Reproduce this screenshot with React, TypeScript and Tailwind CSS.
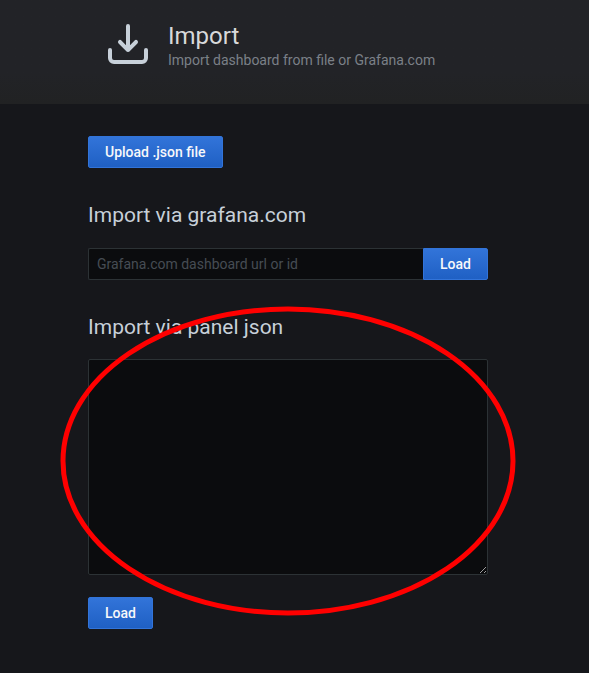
function ImportIcon() {
  return (
    <svg className="size-12 shrink-0 fill-[#c7d0d9]" viewBox="0 0 24 24" aria-hidden="true">
      <path d="M21,14a1,1,0,0,0-1,1v4a1,1,0,0,1-1,1H5a1,1,0,0,1-1-1V15a1,1,0,0,0-2,0v4a3,3,0,0,0,3,3H19a3,3,0,0,0,3-3V15A1,1,0,0,0,21,14Zm-9.71,1.71a1,1,0,0,0,.33.21.94.94,0,0,0,.76,0,1,1,0,0,0,.33-.21l4-4a1,1,0,0,0-1.42-1.42L13,12.59V3a1,1,0,0,0-2,0v9.59L8.71,10.29a1,1,0,1,0-1.42,1.42Z" />
    </svg>
  );
}

function Button({ label, attached = false }: { label: string; attached?: boolean }) {
  const corners = attached ? 'rounded-r-[2px]' : 'rounded-[2px]';
  return (
    <button
      type="button"
      className={`block h-8 shrink-0 border border-[#3274d9] bg-linear-to-b from-[#3274d9] to-[#1f60c4] px-4 text-sm leading-[30px] font-medium whitespace-nowrap text-[#f7f8fa] ${corners}`}
    >
      {label}
    </button>
  );
}

function SectionTitle({ children }: { children: string }) {
  return <h3 className="text-[21px] leading-[26px] text-[#c7d0d9]">{children}</h3>;
}

export default function App() {
  return (
    <div className="relative h-[673px] w-full overflow-hidden bg-[#16171b] font-[Roboto,sans-serif] text-sm">
      <header className="flex h-[104px] items-start bg-linear-to-b from-[#222327] from-70% to-[#212223] pt-5 pl-[104px]">
        <ImportIcon />
        <div className="ml-4 pt-px">
          <h1 className="text-2xl leading-[30px] text-[#d8d9da]">Import</h1>
          <p className="text-sm leading-[18px] text-[#7b8087]">Import dashboard from file or Grafana.com</p>
        </div>
      </header>

      <main className="ml-[88px] w-[400px] pt-8">
        <Button label="Upload .json file" />

        <div className="mt-[34px]">
          <SectionTitle>Import via grafana.com</SectionTitle>
        </div>
        <div className="mt-5 flex">
          <input
            type="text"
            placeholder="Grafana.com dashboard url or id"
            className="h-8 min-w-0 flex-1 rounded-l-[2px] border border-r-0 border-[#2c3235] bg-[#0b0c0e] px-2 text-sm text-[#c7d0d9] placeholder:text-[#464c54]"
          />
          <Button label="Load" attached />
        </div>

        <div className="mt-[34px]">
          <SectionTitle>Import via panel json</SectionTitle>
        </div>
        <textarea className="mt-[19px] block h-[216px] w-full resize rounded-[2px] border border-[#2c3235] bg-[#0b0c0e] p-2 text-[#c7d0d9]" />
        <div className="mt-[22px]">
          <Button label="Load" />
        </div>
      </main>

      <svg className="pointer-events-none absolute inset-0 h-[673px] w-[589px]" viewBox="0 0 589 673" aria-hidden="true">
        <ellipse cx="288" cy="461" rx="225" ry="152" fill="none" stroke="#ff0000" strokeWidth="5" />
      </svg>
    </div>
  );
}
